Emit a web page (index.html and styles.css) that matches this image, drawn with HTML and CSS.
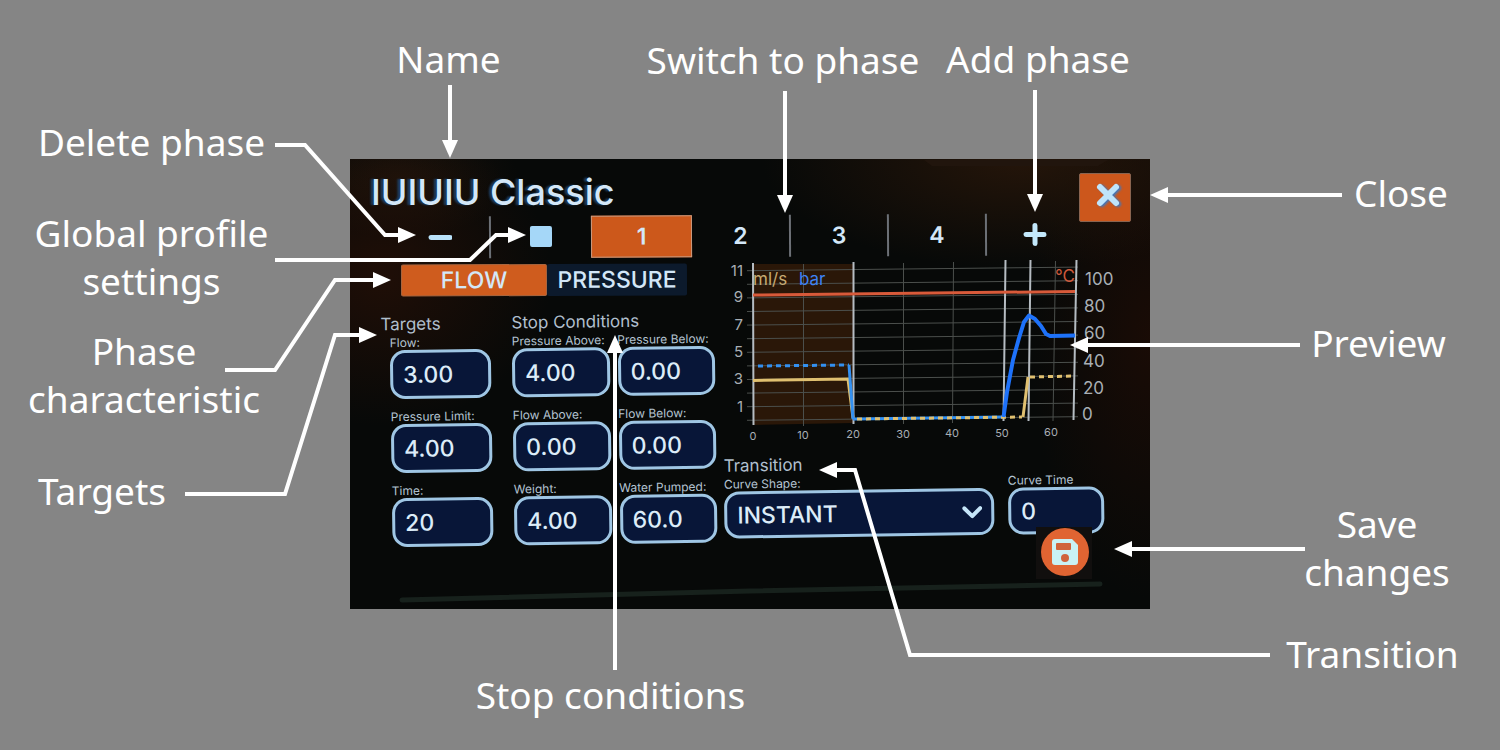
FILE: index.html
```html
<!DOCTYPE html>
<html lang="en">
<head>
<meta charset="utf-8">
<title>Profile editor overview</title>
<link rel="stylesheet" href="styles.css">
</head>
<body>
<main class="stage">
  <section class="device">
    <svg class="bezel" viewBox="350 159 800 450" preserveAspectRatio="none" aria-hidden="true">
      <path d="M924 160H1108L1098 166H932Z" fill="#21150d"/>
      <path d="M402 600L750 591L1100 584" fill="none" stroke="#17211c" stroke-width="5" stroke-linecap="round"/>
    </svg>
    <header class="header">
      <h1 class="title">IUIUIU Classic</h1>
      <button class="close" type="button" aria-label="Close">
        <svg width="30" height="30" viewBox="0 0 30 30"><path d="M7 7L23 23M23 7L7 23" stroke="#bfe4fb" stroke-width="6" stroke-linecap="round"/></svg>
      </button>
    </header>
    <nav class="phases">
      <button class="phase" type="button" aria-label="Delete phase"><svg width="24" height="24" viewBox="0 0 24 24"><path d="M3 12H22" stroke="#b9e2fa" stroke-width="5" stroke-linecap="round"/></svg></button>
      <button class="phase ruled" type="button" aria-label="Global profile settings"><svg width="24" height="24" viewBox="0 0 24 24"><rect x="1" y="1" width="22" height="21" rx="2" fill="#a5d7f8"/></svg></button>
      <button class="phase active" type="button">1</button>
      <button class="phase" type="button">2</button>
      <button class="phase ruled" type="button">3</button>
      <button class="phase ruled" type="button">4</button>
      <button class="phase ruled" type="button" aria-label="Add phase"><svg width="24" height="24" viewBox="0 0 24 24"><path d="M3 12H21M12 3V21" stroke="#c3e8fb" stroke-width="5" stroke-linecap="round"/></svg></button>
    </nav>
    <div class="panes">
      <div class="left-pane">
        <div class="segment">
          <button class="seg on" type="button">FLOW</button>
          <button class="seg" type="button">PRESSURE</button>
        </div>
        <form class="fields">
          <fieldset class="group targets">
            <legend class="heading">Targets</legend>
            <label class="field">Flow:<input type="text" value="3.00"></label>
            <label class="field">Pressure Limit:<input type="text" value="4.00"></label>
            <label class="field">Time:<input type="text" value="20"></label>
          </fieldset>
          <fieldset class="group stops">
            <legend class="heading">Stop Conditions</legend>
            <label class="field">Pressure Above:<input type="text" value="4.00"></label>
            <label class="field">Pressure Below:<input type="text" value="0.00"></label>
            <label class="field">Flow Above:<input type="text" value="0.00"></label>
            <label class="field">Flow Below:<input type="text" value="0.00"></label>
            <label class="field">Weight:<input type="text" value="4.00"></label>
            <label class="field">Water Pumped:<input type="text" value="60.0"></label>
          </fieldset>
        </form>
      </div>
      <div class="right-pane">
        <svg class="chart" viewBox="722 258 396 184" role="img" aria-label="Preview">
          <path d="M753 264H853V423L753 425Z" fill="#2a1708"/>
          <path class="grid" d="M747 270.7l331-3.6M747 284.3l331-3.6M747 297.9l331-3.6M747 311.5l331-3.6M747 325.1l331-3.6M747 338.7l331-3.6M747 352.3l331-3.6M747 365.9l331-3.6M747 379.5l331-3.6M747 393.1l331-3.6M747 406.7l331-3.6M747 420.3l331-3.6"/>
          <path class="grid" d="M803.5 264V426M903.5 263V424M953.5 262L952.500 423M1055.500 261L1053 421"/>
          <path class="marks" d="M753 263L753.500 425M853.500 262V424M1005.500 260L1003.500 421M1030.500 260L1028.500 421M1076.500 260L1073.500 420"/>
          <path class="curve temp" d="M753 295L1075 291.500"/>
          <path class="curve flow" d="M753 380.500L848 379L853 418"/>
          <path class="curve bar dots" d="M758 366L849 365"/>
          <path class="curve bar" d="M849 365L853 419"/>
          <path class="curve bar" d="M853 419L1003 417"/>
          <path class="curve flow dots" d="M857 419L1022 417"/>
          <path class="curve flow" d="M1023 417L1028 377"/>
          <path class="curve flow dots" d="M1030 377L1075 376"/>
          <path class="curve profile" d="M1003.500 417L1007 392L1013 360L1019 338L1024 322L1029 315.500L1035 319L1041 326L1046 334L1050 336L1075 335.500"/>
          <g class="axis end"><text x="743" y="276">11</text><text x="743" y="302">9</text><text x="743" y="330">7</text><text x="743" y="357">5</text><text x="743" y="384">3</text><text x="743" y="412">1</text></g>
          <g class="axis right"><text x="1085" y="285">100</text><text x="1084" y="312">80</text><text x="1084" y="339">60</text><text x="1083" y="367">40</text><text x="1083" y="394">20</text><text x="1082" y="420">0</text></g>
          <g class="axis time"><text x="753" y="440">0</text><text x="803" y="439">10</text><text x="853" y="438">20</text><text x="903" y="438">30</text><text x="952" y="437">40</text><text x="1002" y="437">50</text><text x="1051" y="436">60</text></g>
          <g class="units"><text class="u-flow" x="753" y="285">ml/s</text><text class="u-bar" x="799" y="285">bar</text><text class="u-temp" x="1055" y="282">°C</text></g>
        </svg>
        <form class="transition">
          <h2 class="heading">Transition</h2>
          <div class="row">
            <label class="field wide">Curve Shape:
              <span class="pick">
                <select><option>INSTANT</option></select>
                <svg class="chevron" width="20" height="14" viewBox="0 0 20 14"><path d="M2 3L10 11L18 3" fill="none" stroke="#c5e5f8" stroke-width="4" stroke-linecap="round" stroke-linejoin="round"/></svg>
              </span>
            </label>
            <label class="field">Curve Time<input type="text" value="0"></label>
          </div>
        </form>
      </div>
    </div>
    <button class="save" type="button" aria-label="Save changes">
      <svg width="56" height="52" viewBox="0 0 56 52">
        <circle cx="29" cy="25" r="24" fill="#e06432"/>
        <path d="M19 12H36L42 18V35Q42 38 39 38H19Q16 38 16 35V15Q16 12 19 12Z" fill="#c9f1f5"/>
        <rect x="20" y="16" width="15" height="7" rx="1" fill="#d0633c"/>
        <circle cx="29" cy="31" r="4" fill="#d0633c"/>
      </svg>
    </button>
  </section>

  <svg class="arrows" viewBox="0 0 1500 750" preserveAspectRatio="none" aria-hidden="true">
    <defs>
      <marker id="tip" markerUnits="userSpaceOnUse" markerWidth="18" markerHeight="16" refX="1" refY="8" orient="auto"><path d="M0 0L18 8L0 16Z" fill="#fff"/></marker>
    </defs>
    <g fill="none" stroke="#fff" stroke-width="4">
      <path marker-end="url(#tip)" d="M450 85V141"/>
      <path marker-end="url(#tip)" d="M785 91V196"/>
      <path marker-end="url(#tip)" d="M1035 90V195"/>
      <path marker-end="url(#tip)" d="M275 145H305L385 235H399"/>
      <path marker-end="url(#tip)" d="M275 260H470L496 235H509"/>
      <path marker-end="url(#tip)" d="M225 370H275L335 280H374"/>
      <path marker-end="url(#tip)" d="M185 494H285L335 335H360"/>
      <path marker-end="url(#tip)" d="M615 670V352"/>
      <path marker-end="url(#tip)" d="M1270 655H910L855 470H836"/>
      <path marker-end="url(#tip)" d="M1300 345H1087"/>
      <path marker-end="url(#tip)" d="M1342 195H1167"/>
      <path marker-end="url(#tip)" d="M1305 549H1131"/>
    </g>
  </svg>

  <p class="note n-name">Name</p>
  <p class="note n-switch">Switch to phase</p>
  <p class="note n-add">Add phase</p>
  <p class="note n-delete">Delete phase</p>
  <p class="note n-global">Global profile<br>settings</p>
  <p class="note n-char">Phase<br>characteristic</p>
  <p class="note n-targets">Targets</p>
  <p class="note n-close">Close</p>
  <p class="note n-preview">Preview</p>
  <p class="note n-save">Save<br>changes</p>
  <p class="note n-transition">Transition</p>
  <p class="note n-stop">Stop conditions</p>
</main>
</body>
</html>
```
FILE: styles.css
```css
* { box-sizing: border-box; }

body {
  margin: 0;
  background: #858585;
  font-family: Inter, "Liberation Sans", sans-serif;
}

.stage {
  position: relative;
  display: grid;
  grid-template-columns: 7fr 16fr 7fr;
  align-items: start;
  padding-top: 159px;
  width: 100%;
  aspect-ratio: 2 / 1;
}

/* Device screen */
.device {
  position: relative;
  grid-column: 2;
  min-height: 450px;
  color: #d3e7f8;
  background:
    radial-gradient(ellipse 170px 150px at 4% 26%, rgba(48, 18, 6, .6), transparent),
    radial-gradient(ellipse 260px 110px at 84% 0%, rgba(44, 24, 10, .8), transparent),
    radial-gradient(ellipse 120px 260px at 100% 40%, rgba(30, 12, 5, .8), transparent),
    radial-gradient(ellipse 120px 60px at 6% 4%, rgba(40, 24, 12, .6), transparent),
    #070908;
}

.bezel {
  position: absolute;
  inset: 0;
  width: 100%;
  height: 100%;
}

.header {
  position: relative;
  display: flex;
  justify-content: space-between;
  align-items: flex-start;
  height: 56px;
  padding: 14px 19px 0 21px;
}

.title {
  margin: 0;
  font-size: 36px;
  font-weight: 500;
  line-height: 38px;
  text-shadow: -3px 0 2px #1d3c5e;
}

button { font-family: inherit; border: 0; padding: 0; color: inherit; }

.close {
  display: grid;
  place-items: center;
  flex: none;
  width: 52px;
  height: 49px;
  padding: 0 0 6px 6px;
  border: 1px solid #8a6450;
  border-radius: 2px;
  background: #cc571c;
}

.close svg { filter: drop-shadow(2px 1px 1px #3c78c0); }

.phases {
  position: relative;
  display: grid;
  grid-template-columns: 98fr 102fr 101fr 97fr 98fr 98fr 98fr;
  height: 42px;
  margin: 0 67px 0 41px;
  transform: rotate(-.3deg);
}

.phase {
  display: grid;
  place-items: center;
  background: none;
  font-size: 23px;
  font-weight: 600;
}

.phase.ruled { border-left: 2px solid #6c7076; }

.phase.active {
  border: 1px solid #c89a80;
  background: #cc581b;
}

.panes {
  position: relative;
  display: flex;
  gap: 6px;
  padding: 1px 32px 0;
}

.left-pane { flex: 0 0 334px; padding-top: 6px; }
.right-pane { flex: 1; min-width: 0; }

.segment { display: flex; height: 32px; margin-left: 19px; transform: rotate(-.2deg); width: 286px; }

.seg {
  flex: 0 0 140px;
  border-radius: 2px;
  background: #0c1a2c;
  font-size: 23px;
  font-weight: 500;
}

.seg.on { flex: 1; background: #cf5c1e; border: 1px solid #a9663f; }

.fields {
  display: flex;
  align-items: flex-start;
  gap: 21px;
  margin-top: 16px;
  transform: rotate(-.8deg);
}

.group { margin: 0; padding: 0; border: 0; min-width: 0; }

.heading {
  margin: 0 0 2px;
  padding: 0;
  font-size: 17px;
  font-weight: 400;
  line-height: 20px;
  color: #b0bfcd;
}

.targets { flex: 0 0 110px; padding-left: 9px; }
.targets .heading { margin-left: -9px; }
.targets .field { margin-bottom: 11px; }

.stops {
  flex: 1;
  display: grid;
  grid-template-columns: 1fr 1fr;
  align-content: start;
  gap: 11px 8px;
}

.field {
  display: block;
  font-size: 12px;
  line-height: 14px;
  color: #b4c4d2;
  white-space: nowrap;
}

.field input, .field select {
  display: block;
  width: 100%;
  height: 49px;
  margin: 0;
  padding: 0 0 0 10px;
  border: 3px solid #9fc6e4;
  border-radius: 15px;
  background: #081638;
  color: #dcecf8;
  font-family: inherit;
  font-size: 23px;
  font-weight: 500;
  appearance: none;
}

.chart { display: block; width: 100%; height: auto; }
.grid { stroke: #4b4f4c; fill: none; }
.marks { stroke: #b5bcc2; stroke-width: 2; fill: none; }
.curve { fill: none; stroke-width: 3; }
.temp { stroke: #d85a3a; }
.flow { stroke: #e0c070; }
.bar { stroke: #3390f0; }
.profile { stroke: #1e72fa; stroke-width: 4; stroke-linejoin: round; }
.dots { stroke-dasharray: 5 4; }
.axis { font-size: 15px; fill: #a9afb5; }
.end { text-anchor: end; }
.right { font-size: 17px; }
.time { font-size: 11px; text-anchor: middle; }
.units { font-size: 17px; }
.u-flow { fill: #c6aa72; }
.u-bar { fill: #3d82f5; }
.u-temp { fill: #cf5a3c; }

.transition {
  margin: 11px 14px 0 2px;
  transform: rotate(-.8deg);
}

.row { display: grid; grid-template-columns: 270px 1fr; gap: 14px; }
.row input, .row select { height: 47px; }
.pick { position: relative; display: block; }
.chevron { position: absolute; right: 12px; top: 17px; }

.save {
  position: absolute;
  right: 58px;
  bottom: 30px;
  background: #110f0e;
  height: 52px;
}

.save svg { display: block; }

/* Callouts */
.arrows {
  position: absolute;
  inset: 0;
  width: 100%;
  height: 100%;
  pointer-events: none;
}

.note {
  position: absolute;
  margin: 0;
  transform: translate(-50%, -50%);
  color: #fff;
  font-family: "Noto Sans", sans-serif;
  font-size: 37px;
  line-height: 48px;
  text-align: center;
  white-space: nowrap;
}

.n-name { left: 29.9%; top: 7.9%; }
.n-switch { left: 52.2%; top: 8%; }
.n-add { left: 69.2%; top: 7.9%; }
.n-delete { left: 10.1%; top: 18.9%; }
.n-global { left: 10.1%; top: 34.3%; }
.n-char { left: 9.6%; top: 50%; }
.n-targets { left: 6.8%; top: 65.5%; }
.n-close { left: 93.4%; top: 25.7%; }
.n-preview { left: 91.9%; top: 45.7%; }
.n-save { left: 91.8%; top: 73.1%; }
.n-transition { left: 91.5%; top: 87.2%; }
.n-stop { left: 40.7%; top: 92.7%; }
```
